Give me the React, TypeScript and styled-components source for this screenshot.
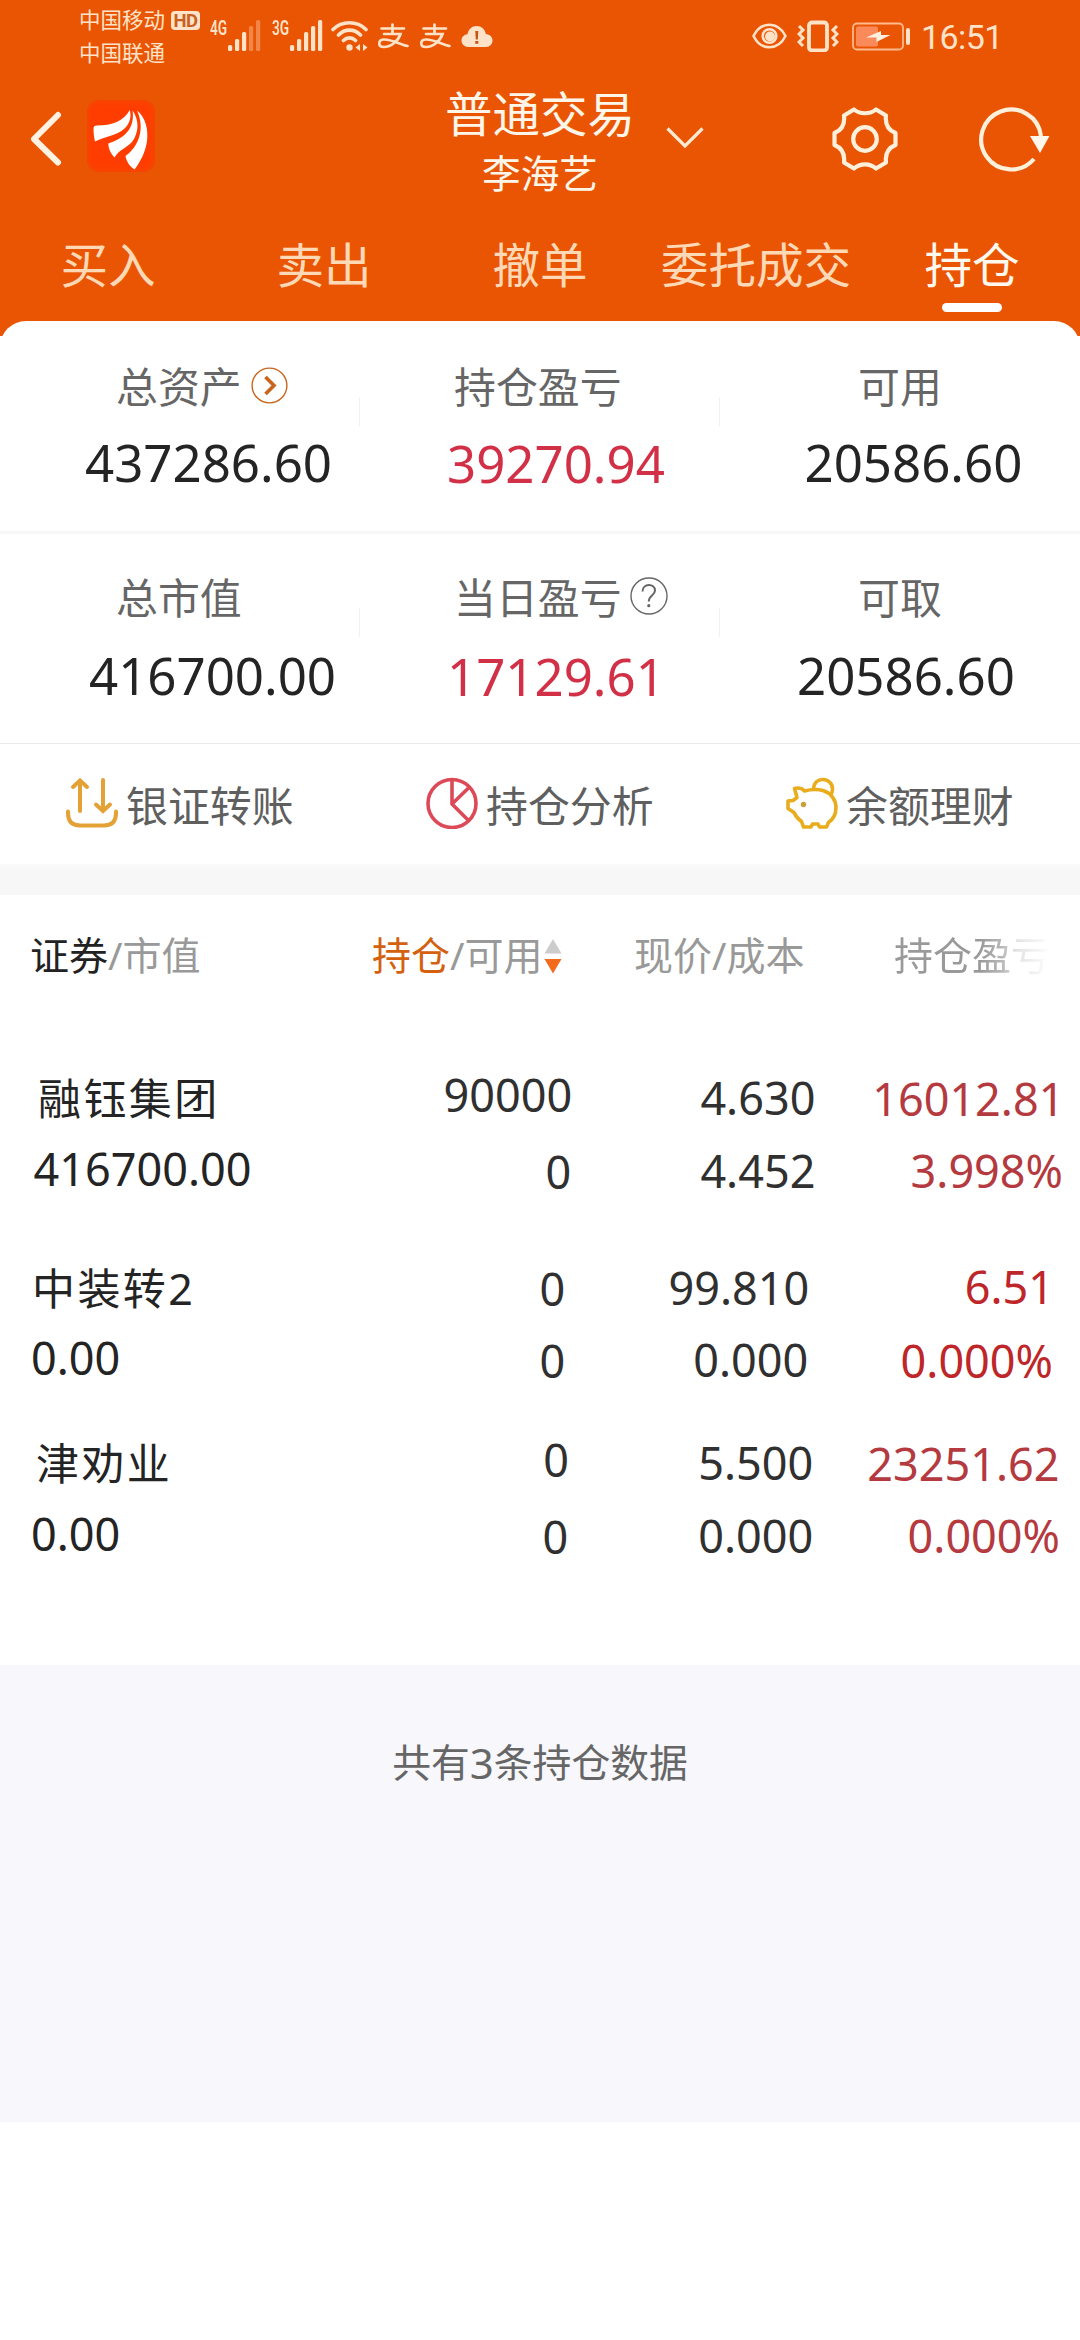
import React from "react";
import styled, { createGlobalStyle } from "styled-components";

const Global = createGlobalStyle`
  * { box-sizing: border-box; }
  body { margin: 0; background: #fff; }
`;

const Page = styled.div`
  width: 1080px;
  min-height: 2340px;
  background: #fff;
  font-family: "Noto Sans", "Noto Sans CJK SC", sans-serif;
  font-weight: 400;
  color: #242424;
  overflow: hidden;
`;

/* ---------- orange top area ---------- */

const Top = styled.header`
  background: #ea5504;
  height: 336px;
  display: flex;
  flex-direction: column;
`;

const StatusBar = styled.div`
  height: 76px;
  display: flex;
  align-items: flex-start;
  padding-left: 79px;
  color: #ffe3c8;
`;

const Carriers = styled.div`
  width: 92px;
  padding-top: 4px;
  font-size: 21.5px;
  line-height: 32.5px;
  white-space: nowrap;
`;

const HdBadge = styled.span`
  width: 29px;
  height: 19px;
  margin-top: 11px;
  border-radius: 4px;
  background: #ffe3c8;
  color: #c9601f;
  font: 700 18.5px/20px Roboto, sans-serif;
  letter-spacing: -0.5px;
  text-align: center;
`;

const Network = styled.div<{ $gap: number }>`
  display: flex;
  margin-left: ${(p) => p.$gap}px;
  padding-top: 20px;
`;

const NetLabel = styled.span`
  width: 18px;
  font: 600 19.5px/17px Roboto, sans-serif;
  transform: scaleX(0.7);
  transform-origin: left;
  white-space: nowrap;
`;

const Glyph = styled.svg<{ $ml?: number; $mt?: number }>`
  display: block;
  flex: none;
  margin-left: ${(p) => p.$ml ?? 0}px;
  margin-top: ${(p) => p.$mt ?? 0}px;
`;

const StatusRight = styled.div`
  display: flex;
  margin-left: auto;
  width: 328px;
`;

const Clock = styled.span`
  margin-left: 9px;
  margin-top: 17px;
  font: 400 34px/40px Roboto, sans-serif;
  letter-spacing: -0.6px;
`;

const NavBar = styled.div`
  height: 140px;
  display: flex;
  align-items: flex-start;
`;

const AppLogo = styled.div`
  width: 68px;
  height: 72px;
  margin: 24px 0 0 25px;
  border-radius: 12px;
  background: #ff3d00 content-box;
  box-shadow: inset 0 0 6px 2px #f34802;
`;

const Titles = styled.div`
  margin-left: 289px;
  width: 192px;
  text-align: center;
  color: #fff6ea;
  white-space: nowrap;
`;

const Title = styled.div`
  padding-top: 6px;
  font-size: 47.5px;
  line-height: 64px;
`;

const SubTitle = styled.div`
  font-size: 38.7px;
  line-height: 54px;
`;

const Tabs = styled.nav`
  height: 105px;
  display: grid;
  grid-template-columns: repeat(5, 1fr);
`;

const Tab = styled.div<{ $active?: boolean }>`
  display: flex;
  flex-direction: column;
  align-items: center;
  padding-top: 16px;
  font-size: 47.6px;
  line-height: 66px;
  color: ${(p) => (p.$active ? "#fff8ee" : "#ffd8b6")};
`;

const TabMark = styled.span`
  width: 60px;
  height: 9px;
  margin-top: 5px;
  border-radius: 5px;
  background: #fff;
`;

const CardCap = styled.div`
  height: 15px;
  overflow: hidden;
`;

const CardCapShape = styled.div`
  height: 50px;
  border-radius: 26px 26px 0 0;
  background: #fff;
`;

/* ---------- account summary ---------- */

const StatRow = styled.section<{ $h: number; $pt: number }>`
  height: ${(p) => p.$h}px;
  padding-top: ${(p) => p.$pt}px;
  display: grid;
  grid-template-columns: repeat(3, 360px);
`;

const Stat = styled.div<{ $tick?: boolean }>`
  background: ${(p) =>
    p.$tick
      ? "linear-gradient(#f1f1f1, #f1f1f1) right 0 top 35px / 1px 29px no-repeat"
      : "none"};
`;

const StatLabel = styled.div<{ $pl: number }>`
  display: flex;
  height: 50px;
  padding-left: ${(p) => p.$pl}px;
  font-size: 41.9px;
  line-height: 50px;
  color: #666;
  white-space: nowrap;
`;

const StatValue = styled.div<{ $pl: number; $gap: number; $red?: boolean }>`
  margin-top: ${(p) => p.$gap}px;
  padding-left: ${(p) => p.$pl}px;
  font-size: 51px;
  line-height: 60px;
  color: ${(p) => (p.$red ? "#d23046" : "#242424")};
`;

const Rule = styled.div<{ $h: number; $c: string }>`
  height: ${(p) => p.$h}px;
  background: ${(p) => p.$c};
`;

const Actions = styled.section`
  height: 120px;
  display: grid;
  grid-template-columns: repeat(3, 360px);
`;

const Action = styled.div`
  display: flex;
  align-items: flex-start;
  padding-left: 65px;
  padding-top: 33px;
`;

const ActionText = styled.span`
  margin-left: 7px;
  font-size: 41.9px;
  line-height: 57px;
  color: #5f5f5f;
  white-space: nowrap;
`;

const Band = styled.div`
  height: 31px;
  background: linear-gradient(#fbfbfb, #f7f7f7 8px);
`;

/* ---------- holdings table ---------- */

const columns = "340px 240px 240px 260px";

const TableHead = styled.div`
  height: 166px;
  padding-top: 35px;
  display: grid;
  grid-template-columns: ${columns};
  font-size: 39px;
  line-height: 50px;
  color: #999;
  white-space: nowrap;
`;

const HeadCell = styled.div<{ $pl: number; $fade?: boolean }>`
  display: flex;
  padding-left: ${(p) => p.$pl}px;
  ${(p) =>
    p.$fade &&
    `color: transparent;
     background: linear-gradient(90deg, #999 160px, #b8b8b8 182px, #e2e2e2 196px, #fff 232px);
     -webkit-background-clip: text;
     background-clip: text;`}
`;

const HeadStrong = styled.span<{ $c: string }>`
  color: ${(p) => p.$c};
`;

const HoldingRow = styled.div<{ $h: number }>`
  height: ${(p) => p.$h}px;
  display: grid;
  grid-template-columns: ${columns};
  font-size: 45px;
  line-height: 60px;
  white-space: nowrap;
`;

const Cell = styled.div<{ $c: string; $end?: boolean }>`
  display: flex;
  flex-direction: column;
  align-items: ${(p) => (p.$end ? "flex-end" : "flex-start")};
  color: ${(p) => p.$c};
`;

const Line = styled.span<{ $mt: number; $inset: number }>`
  height: 60px;
  margin: ${(p) => `${p.$mt}px ${p.$inset}px 0`};
`;

const Name = styled(Line)`
  font-size: 43px;
  letter-spacing: 2.4px;
`;

const Footer = styled.div`
  height: 457px;
  padding-top: 69px;
  background: #f7f7fc;
  text-align: center;
  font-size: 38.8px;
  line-height: 56px;
  color: #666;
`;

const Count = styled.span`
  font-size: 42px;
  vertical-align: -2px;
  line-height: 1;
`;

/* ---------- icons ---------- */

const cream = "#ffe3c8";

const Bars = ({ weak }: { weak?: boolean }) => (
  <Glyph width="34" height="32" viewBox="0 0 34 32">
    {[6, 12, 19, 25, 31].map((h, i) => (
      <rect key={h} x={i * 7} y={31 - h} width="4.2" height={h} rx="1.6" fill={cream}
        opacity={weak && i > 2 ? 0.35 : 1} />
    ))}
  </Glyph>
);

const Alipay = ({ ml }: { ml: number }) => (
  <Glyph $ml={ml} $mt={23} width="33" height="27" viewBox="0 0 33 27" fill="none" stroke={cream} strokeWidth="2.700" strokeLinecap="round">
    <path d="M4.500 5.500H27M15.500 1.500V10.500M7 11H23.500C21.500 17.500 14 24 7 24C.8 24 .8 17 6.500 16.500C14 16 22 21 30.500 23" />
  </Glyph>
);

const Zigzag = "M0 0l4 4-4 4 4 4-4 4 4 4";

/* ---------- data ---------- */

type Entry = [text: string, mt: number, inset: number];
interface Holding {
  h: number;
  tone: string;
  name: Entry;
  cells: [Entry, Entry, Entry, Entry, Entry, Entry, Entry];
}

const holdings: Holding[] = [
  {
    h: 190, tone: "#b43a3f", name: ["融钰集团", 8, 38],
    cells: [["416700.00", 9.6, 33.5], ["90000", 3.5, 7.7], ["0", 17, 8.7], ["4.630", 6.5, 4.6],
      ["4.452", 13, 4.6], ["16012.81", 7.5, 15.6], ["3.998%", 12, 17]],
  },
  {
    h: 175, tone: "#be2629", name: ["中装转2", 8, 32],
    cells: [["0.00", 8.6, 31], ["0", 7.5, 14.7], ["0", 12, 14.7], ["99.810", 6.5, 10.7],
      ["0.000", 12, 11.7], ["6.51", 5.5, 26], ["0.000%", 14, 27]],
  },
  {
    h: 239, tone: "#b43a3f", name: ["津劝业", 8, 36],
    cells: [["0.00", 9.6, 31], ["0", 3.5, 11], ["0", 17, 11.7], ["5.500", 6.5, 6.7],
      ["0.000", 13, 6.7], ["23251.62", 7.5, 20.5], ["0.000%", 12, 20]],
  },
];

const Text = ({ e }: { e: Entry }) => <Line $mt={e[1]} $inset={e[2]}>{e[0]}</Line>;

export default function App() {
  return (
    <Page>
      <Global />
      <Top>
        <StatusBar>
          <Carriers>中国移动<br />中国联通</Carriers>
          <HdBadge>HD</HdBadge>
          <Network $gap={10}><NetLabel>4G</NetLabel><Bars weak /></Network>
          <Network $gap={10}><NetLabel>3G</NetLabel><Bars /></Network>
          <Glyph $ml={7} $mt={20} width="38" height="32" viewBox="0 0 38 32" fill="none" stroke={cream} strokeWidth="3.6" strokeLinecap="round">
            <path d="M2 9.500C11 .5 26 .5 35 9.500M7.500 15C14 8.500 23 8.500 29.500 15M12.500 20.500C16 17 21 17 24.500 20.500" />
            <circle cx="18.500" cy="27.500" r="3.200" fill={cream} stroke="none" />
            <path d="M29 24v7l-4.500-3.500zM32 24v7l4.500-3.500z" fill={cream} stroke="none" />
          </Glyph>
          <Alipay ml={8} />
          <Alipay ml={9} />
          <Glyph $ml={9} $mt={25} width="32" height="23" viewBox="0 0 32 23">
            <path d="M7.500 22C3 22 .5 19 .5 15.500S3 9.500 6.500 9.200C7.500 4 11 1 15.500 1c5 0 8.500 3.200 9.300 8 4 .3 6.700 3 6.700 6.500S29 22 25 22z" fill={cream} />
            <path d="M14.300 6h3l-.5 8.500h-2zM14.300 16h3v2.800h-3z" fill="#c4530f" />
          </Glyph>
          <StatusRight>
            <Glyph $mt={23} width="35" height="27" viewBox="0 0 35 27" fill="none" stroke={cream} strokeWidth="2.600">
              <path d="M1.500 13C9-2 26-2 33.500 13C26 28 9 28 1.500 13Z" />
              <circle cx="17.500" cy="13" r="6.800" />
              <circle cx="18" cy="13.500" r="5" fill={cream} stroke="none" />
            </Glyph>
            <Glyph $ml={10} $mt={20} width="42" height="32" viewBox="0 0 42 32" fill="none" stroke={cream} strokeWidth="3">
              <rect x="12" y="2.500" width="18" height="28" rx="3" strokeWidth="3.800" />
              <path d={Zigzag} transform="translate(2 6)" />
              <path d={Zigzag} transform="translate(40 6) scale(-1 1)" />
            </Glyph>
            <Glyph $ml={13} $mt={22} width="60" height="29" viewBox="0 0 60 29">
              <rect x="1" y="1.500" width="50" height="26" rx="4" fill="none" stroke="#ffb98c" strokeWidth="1.800" />
              <rect x="4" y="4.500" width="22" height="20" rx="2" fill="#fb8a5a" />
              <path d="M14 15.500L29 9v4h9.500L24.500 20v-4.500z" fill="#fff0e0" />
              <rect x="54" y="6" width="4" height="17" rx="2" fill={cream} />
            </Glyph>
            <Clock>16:51</Clock>
          </StatusRight>
        </StatusBar>
        <NavBar>
          <Glyph $ml={30} $mt={35} width="32" height="56" viewBox="0 0 32 56" fill="none" stroke="#fff2e2" strokeWidth="6" strokeLinecap="round" strokeLinejoin="round">
            <path d="M28 4L4 28L28 51.500" />
          </Glyph>
          <AppLogo>
            <Glyph width="68" height="72" viewBox="0 0 68 72" fill="#fff">
              <path d="M6.500 29C6.300 26.500 7.500 25.500 10 25.500C25 25.500 37 21 42.800 10C44.500 17 43 23.500 37 29C29.500 35.500 18.500 36.500 8 41.500C7 37.500 6.500 33 6.500 29Z" />
              <path d="M45.500 10.500C52.500 20 52 33 45 42C38.500 48.500 32.500 49.500 27.500 57.500C24 54 21.500 49 21.300 43.500C36 39 48.500 29 45.500 10.500Z" />
              <path d="M50 10.500C58.500 17.500 61.500 29 60 41C58.500 52 53.500 61.500 47.500 69.500C43 66.500 39.500 62 38.500 56C52.500 46 58 28 50 10.500Z" />
            </Glyph>
          </AppLogo>
          <Titles>
            <Title>普通交易</Title>
            <SubTitle>李海艺</SubTitle>
          </Titles>
          <Glyph $ml={30} $mt={50} width="38" height="24" viewBox="0 0 38 24" fill="none" stroke="#ffe9d2" strokeWidth="3.200">
            <path d="M1.500 2.500L19 20L36.500 2.500" />
          </Glyph>
          <Glyph $ml={128} $mt={31} width="66" height="64" viewBox="0 0 66 64" fill="none" stroke="#fff0dc" strokeWidth="4.200" strokeLinejoin="round">
            <path d="M22 2.500C28 7.500 38 7.500 44 2.500L54 8.500C53 17 56 23 63.500 26V38C56 41 53 47 54 55.500L44 61.500C38 56 28 56 22 61.500L12 55.500C13 47 10 41 2.500 38V26C10 23 13 17 12 8.500Z" />
            <circle cx="33" cy="32" r="11.800" />
          </Glyph>
          <Glyph $ml={80} $mt={30} width="74" height="68" viewBox="0 0 74 68" fill="none" stroke="#fff0dc" strokeWidth="4.200">
            <path d="M63 30A30 30 0 1 0 56 53" />
            <path d="M52 30H71.500L62 47Z" fill="#fff6ec" stroke="none" />
          </Glyph>
        </NavBar>
        <Tabs>
          <Tab>买入</Tab>
          <Tab>卖出</Tab>
          <Tab>撤单</Tab>
          <Tab>委托成交</Tab>
          <Tab $active>持仓<TabMark /></Tab>
        </Tabs>
        <CardCap><CardCapShape /></CardCap>
      </Top>

      <StatRow $h={195} $pt={26}>
        <Stat $tick>
          <StatLabel $pl={116}>
            总资产
            <Glyph $ml={9} $mt={5} width="37" height="37" viewBox="0 0 37 37" fill="none" stroke="#c8641e">
              <circle cx="18.500" cy="18.500" r="17.400" strokeWidth="1.400" />
              <path d="M14.500 10L23 18.500L14.500 27" strokeWidth="3.600" />
            </Glyph>
          </StatLabel>
          <StatValue $gap={20} $pl={85}>437286.60</StatValue>
        </Stat>
        <Stat $tick>
          <StatLabel $pl={94}>持仓盈亏</StatLabel>
          <StatValue $gap={21} $pl={87} $red>39270.94</StatValue>
        </Stat>
        <Stat>
          <StatLabel $pl={138}>可用</StatLabel>
          <StatValue $gap={20} $pl={84.5}>20586.60</StatValue>
        </Stat>
      </StatRow>
      <Rule $h={3} $c="#f7f7f7" />
      <StatRow $h={209} $pt={39}>
        <Stat $tick>
          <StatLabel $pl={116}>总市值</StatLabel>
          <StatValue $gap={22} $pl={89}>416700.00</StatValue>
        </Stat>
        <Stat $tick>
          <StatLabel $pl={94}>
            当日盈亏
            <Glyph $ml={8} $mt={4} width="38" height="38" viewBox="0 0 38 38" fill="none" stroke="#666">
              <circle cx="19" cy="19" r="18" strokeWidth="1.400" />
              <path d="M12.500 14.500C12.500 6 25 6 25 13.500C25 18.500 18.800 18 18.800 24.500" strokeWidth="2" />
              <circle cx="18.800" cy="28.700" r="1.600" fill="#666" stroke="none" />
            </Glyph>
          </StatLabel>
          <StatValue $gap={23} $pl={87} $red>17129.61</StatValue>
        </Stat>
        <Stat>
          <StatLabel $pl={138}>可取</StatLabel>
          <StatValue $gap={22} $pl={77}>20586.60</StatValue>
        </Stat>
      </StatRow>
      <Rule $h={1} $c="#e8e8e8" />

      <Actions>
        <Action>
          <Glyph width="54" height="52" viewBox="0 0 54 52" fill="none" stroke="#e3a136" strokeWidth="4" strokeLinecap="round">
            <path d="M15 34V4M8 10L15 3.500L22 10" />
            <path d="M38 3V33M31 27.500L38 34L45 27.500" />
            <path d="M3 34.500V36C3 44 7 48.500 15 48.500H39C47 48.500 51 44 51 36V34.500" />
          </Glyph>
          <ActionText>银证转账</ActionText>
        </Action>
        <Action>
          <Glyph width="54" height="52" viewBox="0 0 54 52" fill="none" stroke="#dc4a58" strokeWidth="3.600">
            <circle cx="27" cy="26.500" r="24" />
            <path d="M27 3V27L43.500 43.500M27 27L43.500 11" />
          </Glyph>
          <ActionText>持仓分析</ActionText>
        </Action>
        <Action>
          <Glyph width="54" height="52" viewBox="0 0 54 52" fill="none" stroke="#e8ac1c" strokeWidth="3.600" strokeLinejoin="round">
            <path d="M12 20.500L9.500 11.500C13 10.500 17 11 19.500 14C25 12.500 32 12 38 13.500C46 16 51 23 51 30.500C51 37 48 42.500 43.500 45.500L41.500 50H34.500L33 47H27.500L26 50H18.500L16.500 44.500C13 42 10.500 39 9 35.500L3 31.500V24L8 23.500Z" />
            <path d="M28.500 12C29 5.500 33 2.500 37.500 2.500C43.500 2.500 48 7 47.500 12.500C47.500 15 46.800 16.500 45.500 18" />
            <circle cx="18.500" cy="27.500" r="2.700" fill="#c9a03a" stroke="none" />
          </Glyph>
          <ActionText>余额理财</ActionText>
        </Action>
      </Actions>
      <Band />

      <TableHead>
        <HeadCell $pl={30}><HeadStrong $c="#222">证券</HeadStrong>/市值</HeadCell>
        <HeadCell $pl={32}>
          <HeadStrong $c="#d4610f">持仓</HeadStrong>/可用
          <Glyph $mt={9} $ml={1} width="18" height="36" viewBox="0 0 18 36">
            <path d="M9 0L17.500 14.500H.5Z" fill="#ccc" />
            <path d="M.5 20H17.500L9 34.500Z" fill="#f26a1b" />
          </Glyph>
        </HeadCell>
        <HeadCell $pl={54}>现价/成本</HeadCell>
        <HeadCell $pl={74} $fade>持仓盈亏</HeadCell>
      </TableHead>

      {holdings.map(({ h, tone, name, cells }) => (
        <HoldingRow key={name[0]} $h={h}>
          <Cell $c="#242424">
            <Name $mt={name[1]} $inset={name[2]}>{name[0]}</Name>
            <Text e={cells[0]} />
          </Cell>
          <Cell $c="#303030" $end><Text e={cells[1]} /><Text e={cells[2]} /></Cell>
          <Cell $c="#303030" $end><Text e={cells[3]} /><Text e={cells[4]} /></Cell>
          <Cell $c={tone} $end><Text e={cells[5]} /><Text e={cells[6]} /></Cell>
        </HoldingRow>
      ))}

      <Footer>共有<Count>3</Count>条持仓数据</Footer>
    </Page>
  );
}
